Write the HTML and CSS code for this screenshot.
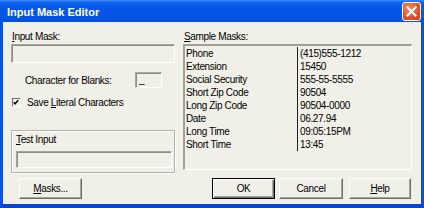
FILE: index.html
```html
<!DOCTYPE html>
<html>
<head>
<meta charset="utf-8">
<link rel="stylesheet" href="styles.css">
</head>
<body>
<div class="window">
  <div class="titlebar">
    <span class="title">Input Mask Editor</span>
    <span class="close"><svg width="11" height="11" viewBox="0 0 11 11"><path d="M1.5 1.5 L9.5 9.5 M9.5 1.5 L1.5 9.5" stroke="#fff" stroke-width="2.2" stroke-linecap="square"/></svg></span>
  </div>
  <div class="client">
    <div class="left">
      <div class="label"><u>I</u>nput Mask:</div>
      <div class="edit mask"></div>
      <div class="charrow">
        <span class="charlabel">Character for Blanks:</span>
        <span class="edit charbox">_</span>
      </div>
      <div class="checkrow">
        <span class="check"><svg width="9" height="9" viewBox="0 0 9 9"><path d="M2 4 L3.5 6 L7 2" stroke="#000" stroke-width="1.6" fill="none"/></svg></span>
        <span>Save <u>L</u>iteral Characters</span>
      </div>
      <div class="group">
        <div class="grouplabel"><u>T</u>est Input</div>
        <div class="edit testedit"></div>
      </div>
    </div>
    <div class="right">
      <div class="label"><u>S</u>ample Masks:</div>
      <div class="list">
        <div class="row"><span class="c1">Phone</span><span class="c2">(415)555-1212</span></div>
        <div class="row"><span class="c1">Extension</span><span class="c2">15450</span></div>
        <div class="row"><span class="c1">Social Security</span><span class="c2">555-55-5555</span></div>
        <div class="row"><span class="c1">Short Zip Code</span><span class="c2">90504</span></div>
        <div class="row"><span class="c1">Long Zip Code</span><span class="c2">90504-0000</span></div>
        <div class="row"><span class="c1">Date</span><span class="c2">06.27.94</span></div>
        <div class="row"><span class="c1">Long Time</span><span class="c2">09:05:15PM</span></div>
        <div class="row"><span class="c1">Short Time</span><span class="c2">13:45</span></div>
      </div>
    </div>
    <div class="leftbtns">
      <span class="btn masks"><u>M</u>asks...</span>
    </div>
    <div class="rightbtns">
      <span class="btn ok">OK</span>
      <span class="btn cancel">Cancel</span>
      <span class="btn help"><u>H</u>elp</span>
    </div>
  </div>
</div>
</body>
</html>
```
FILE: styles.css
```css
html, body {
  margin: 0;
  padding: 0;
  background: #f1f0e8;
}
.window {
  width: 424px;
  height: 208px;
  box-sizing: border-box;
  background: #f1f0e8;
  border-left: 3px solid #0a52e0;
  border-right: 3px solid #0a4fdc;
  border-bottom: 4px solid #0843d4;
  display: flex;
  flex-direction: column;
  font-family: "Liberation Sans", Arial, sans-serif;
  font-size: 10px;
  letter-spacing: -0.35px;
  color: #000;
}
.titlebar {
  margin: 0 -3px;
  height: 22px;
  flex: none;
  display: flex;
  align-items: flex-start;
  justify-content: space-between;
  background: linear-gradient(#3b8cfc 0px, #1466f0 2px, #0658e8 6px, #0554e4 16px, #0650dc 22px);
}
.title {
  color: #fff;
  font-size: 11px;
  font-weight: bold;
  letter-spacing: 0;
  line-height: 14px;
  padding: 5px 0 0 7px;
}
.close {
  width: 17px;
  height: 17px;
  margin: 2px 3px 0 0;
  border: 1px solid #fff;
  border-radius: 3px;
  background: radial-gradient(circle at 35% 30%, #f08a62, #e2562c 55%, #c83a14);
  display: flex;
  align-items: center;
  justify-content: center;
}
.close svg { display: block; }
.client {
  flex: 1;
  display: grid;
  grid-template-columns: 164px 229px;
  grid-template-rows: 142px 21px;
  column-gap: 8px;
  row-gap: 5px;
  padding: 9px 0 0 8px;
}
.left, .right {
  display: flex;
  flex-direction: column;
}
.label {
  height: 11px;
  line-height: 11px;
  margin-bottom: 2px;
  padding-left: 1px;
}
.edit {
  box-sizing: border-box;
  border-top: 1px solid #a7a69c;
  border-left: 1px solid #a7a69c;
  border-right: 1px solid #fff;
  border-bottom: 1px solid #fff;
  box-shadow: inset 1px 1px 0 #8e8d84;
  background: #f1f0e8;
}
.mask {
  height: 19px;
  width: 164px;
}
.charrow {
  margin-top: 9px;
  height: 16px;
  display: flex;
  align-items: center;
  padding-left: 14px;
}
.charlabel {
  width: 110px;
}
.charbox {
  width: 27px;
  height: 16px;
  line-height: 14px;
  padding-left: 3px;
}
.checkrow {
  margin-top: 8px;
  height: 13px;
  display: flex;
  align-items: center;
  gap: 6px;
  padding-left: 1px;
}
.check {
  width: 9px;
  height: 9px;
  box-sizing: border-box;
  border-top: 1px solid #6f6e66;
  border-left: 1px solid #6f6e66;
  border-right: 1px solid #fff;
  border-bottom: 1px solid #fff;
  display: flex;
}
.check svg { display: block; margin: -1px 0 0 -1px; }
.group {
  margin-top: 21px;
  height: 43px;
  box-sizing: border-box;
  border: 1px solid #b4b2a8;
  box-shadow: 1px 1px 0 #fff, inset 1px 1px 0 #fff;
  padding: 3px 2px 0 4px;
}
.grouplabel {
  height: 11px;
  line-height: 11px;
  margin-bottom: 6px;
}
.testedit {
  width: 156px;
  height: 17px;
}
.list {
  margin-top: 0;
  height: 126px;
  box-sizing: border-box;
  border-top: 2px solid #a09f96;
  border-left: 2px solid #a09f96;
  border-right: 1px solid #fff;
  border-bottom: 1px solid #fff;
  padding-top: 1px;
}
.row {
  display: flex;
  height: 13px;
  line-height: 13px;
}
.c1 {
  width: 111px;
  padding-left: 1px;
}
.c2 {
  border-left: 1px solid #202020;
  padding-left: 2px;
}
.leftbtns {
  display: flex;
  padding-left: 8px;
}
.rightbtns {
  display: flex;
  padding-left: 29px;
}
.btn {
  box-sizing: border-box;
  width: 63px;
  height: 21px;
  display: flex;
  align-items: center;
  justify-content: center;
  border-top: 1px solid #fff;
  border-left: 1px solid #fff;
  border-right: 1px solid #6f6e66;
  border-bottom: 1px solid #6f6e66;
  box-shadow: inset -1px -1px 0 #a8a69c;
}
.ok {
  border: 1px solid #000;
  box-shadow: inset 1px 1px 0 #fff, inset -1px -1px 0 #6f6e66, inset -2px -2px 0 #a8a69c;
}
.cancel {
  width: 64px;
  margin-left: 4px;
}
.help {
  width: 62px;
  margin-left: 6px;
}
u {
  text-decoration: underline;
  text-underline-offset: 1px;
}
```
